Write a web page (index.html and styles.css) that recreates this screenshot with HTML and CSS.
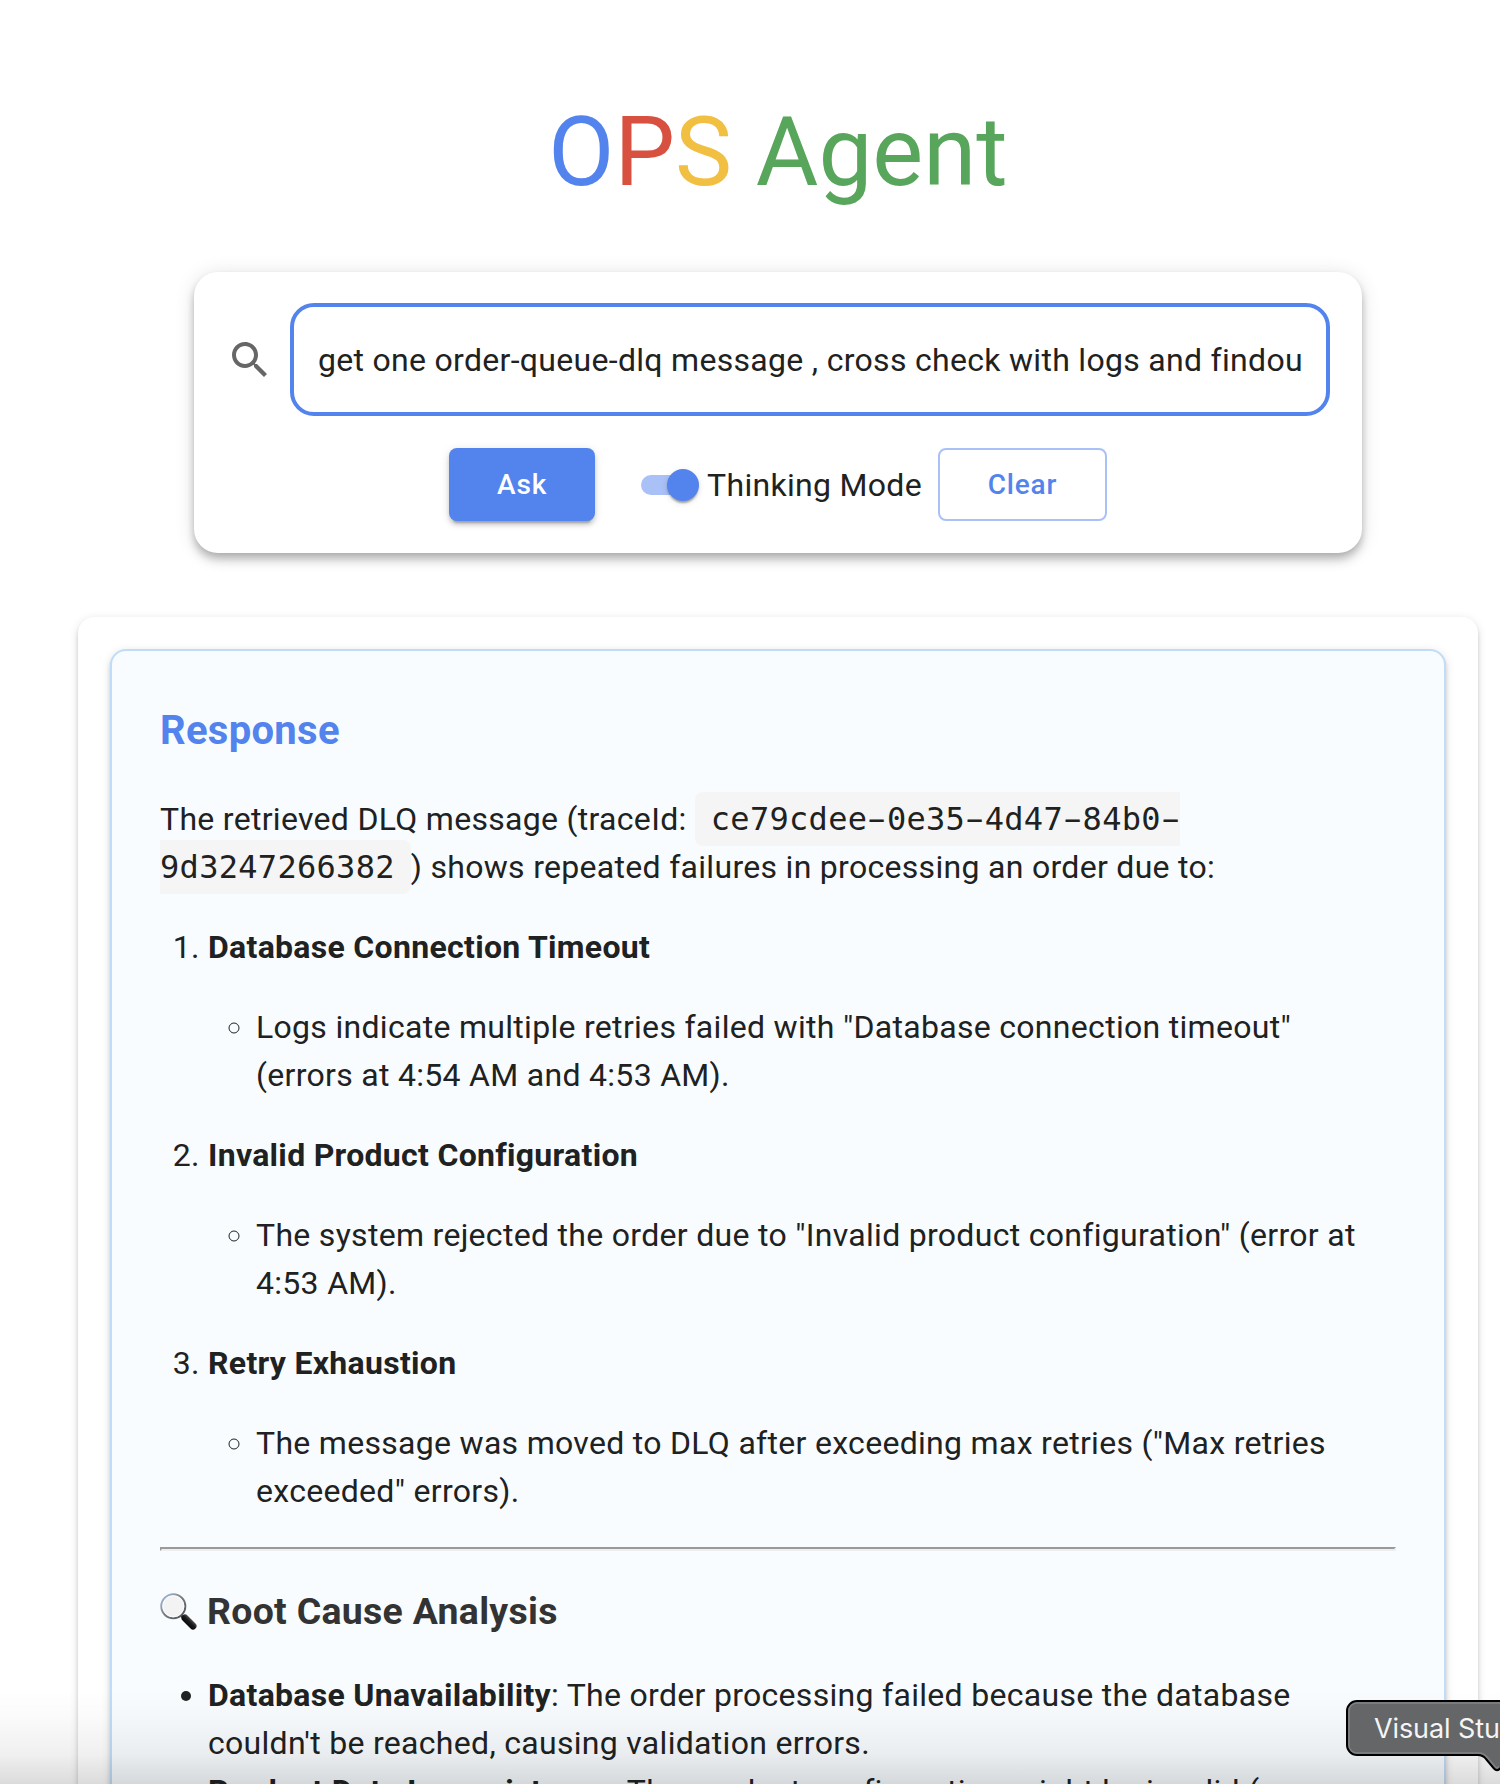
FILE: index.html
```html
<!DOCTYPE html>
<html lang="en">
<head>
<meta charset="utf-8">
<title>OPS Agent</title>
<link rel="stylesheet" href="styles.css">
</head>
<body>
<main class="page">
  <h1 class="title"><span class="blue">O</span><span class="red">P</span><span class="yellow">S</span><span class="green"> Agent</span></h1>

  <section class="search-card">
    <div class="search-row">
      <svg class="search-icon" viewBox="0 0 24 24"><path d="M15.5 14h-.79l-.28-.27C15.41 12.59 16 11.11 16 9.5 16 5.91 13.09 3 9.5 3S3 5.91 3 9.5 5.91 16 9.5 16c1.61 0 3.09-.59 4.23-1.57l.27.28v.79l5 4.99L20.49 19l-4.99-5zm-6 0C7.01 14 5 11.99 5 9.5S7.01 5 9.5 5 14 7.01 14 9.5 11.99 14 9.5 14z"/></svg>
      <div class="search-field"><div class="search-text">get one order-queue-dlq message , cross check with logs and findou</div></div>
    </div>
    <div class="actions">
      <button class="btn btn-ask">Ask</button>
      <label class="toggle"><span class="track"><span class="thumb"></span></span><span>Thinking Mode</span></label>
      <button class="btn btn-clear">Clear</button>
    </div>
  </section>

  <section class="results">
    <article class="response">
      <h2>Response</h2>
      <p>The retrieved DLQ message (traceId: <code>ce79cdee<span class="dash">-</span>0e35<span class="dash">-</span>4d47<span class="dash">-</span>84b0<span class="dash">-</span>9d3247266382</code>) shows repeated failures in processing an order due to:</p>
      <ol>
        <li><p><strong>Database Connection Timeout</strong></p>
          <ul><li>Logs indicate multiple retries failed with "Database connection timeout" (errors at 4:54 AM and 4:53 AM).</li></ul></li>
        <li><p><strong>Invalid Product Configuration</strong></p>
          <ul><li>The system rejected the order due to "Invalid product configuration" (error at 4:53 AM).</li></ul></li>
        <li><p><strong>Retry Exhaustion</strong></p>
          <ul><li>The message was moved to DLQ after exceeding max retries ("Max retries exceeded" errors).</li></ul></li>
      </ol>
      <hr>
      <h3><svg class="lens" viewBox="0 0 37 37">
        <defs>
          <linearGradient id="rim" x1="0" y1="0" x2="1" y2="1"><stop offset="0" stop-color="#a9c3ee"/><stop offset=".45" stop-color="#7d8188"/><stop offset="1" stop-color="#4a4d51"/></linearGradient>
          <linearGradient id="grip" x1="0" y1="1" x2="1" y2="0"><stop offset="0" stop-color="#000"/><stop offset=".55" stop-color="#1a1a1a"/><stop offset="1" stop-color="#777"/></linearGradient>
        </defs>
        <path d="M21 22l4 4" stroke="#333" stroke-width="3"/>
        <path d="M25 25l8 8" stroke="url(#grip)" stroke-width="7" stroke-linecap="round"/>
        <circle cx="13.3" cy="13.3" r="12" fill="#f3f3f4" stroke="url(#rim)" stroke-width="2"/>
        <circle cx="13.3" cy="13.3" r="10.6" fill="none" stroke="#fff" stroke-width=".8"/>
      </svg>Root Cause Analysis</h3>
      <ul class="causes">
        <li><strong>Database Unavailability</strong>: The order processing failed because the database couldn't be reached, causing validation errors.</li>
        <li><strong>Product Data Inconsistency</strong>: The product configuration might be invalid (e.g., missing fields).</li>
      </ul>
    </article>
  </section>
</main>
<div class="dock-shade"></div>
<div class="dock-tip">
  <svg class="dock-shape" viewBox="0 0 154 74">
    <path d="M170 1H11A10 10 0 0 0 1 11V45A10 10 0 0 0 11 55H132C136 55 138 56.500 140 59L148 68.500Q151 72 154 68.500L165 55" fill="#646668" stroke="#000" stroke-width="2"/>
    <path d="M170 3H11A8 8 0 0 0 3 11V45A8 8 0 0 0 11 53H133C137 53 139.500 55 141.500 57.500L149 66.500Q151 69 153 66.500" fill="none" stroke="#808283" stroke-width="1.500"/>
  </svg>
  <span class="dock-text">Visual Studio Code</span>
</div>
</body>
</html>
```
FILE: styles.css
```css
* { box-sizing: border-box; }

body {
  margin: 0;
  height: 1784px;
  position: relative;
  overflow: hidden;
  background: #fff;
  color: #202121;
  font: 32px/48px Roboto, sans-serif;
  letter-spacing: 0.3px;
}

.page {
  display: flex;
  flex-direction: column;
  width: 1400px;
  height: 1784px;
  margin-left: 78px;
}

.title {
  margin: 96px 0 64px;
  font-size: 96px;
  line-height: 112px;
  font-weight: 400;
  letter-spacing: 0;
  text-align: center;
  white-space: pre;
}
.blue { color: #5383ec; }
.red { color: #d85140; }
.yellow { color: #f1bf42; }
.green { color: #58a55c; }

.search-card {
  flex: none;
  align-self: center;
  width: 1168px;
  height: 281px;
  padding: 31px 32px 32px;
  border-radius: 24px;
  background: #fff;
  box-shadow: 0 4px 8px -2px rgba(0,0,0,.2), 0 8px 10px 0 rgba(0,0,0,.14), 0 2px 20px 0 rgba(0,0,0,.12);
}
.search-row {
  display: flex;
  align-items: center;
  gap: 16px;
}
.search-icon {
  width: 48px;
  height: 48px;
  fill: #666;
}
.search-field {
  flex: 1;
  min-width: 0;
  height: 113px;
  padding: 29px 24px;
  border: 4px solid #5383ec;
  border-radius: 24px;
}
.search-text {
  overflow: hidden;
  white-space: nowrap;
}

.actions {
  display: flex;
  justify-content: center;
  align-items: center;
  margin-top: 32px;
}
.btn {
  height: 73px;
  padding: 0;
  border: 0;
  border-radius: 8px;
  font: 500 28px/49px Roboto, sans-serif;
  letter-spacing: 0.8px;
}
.btn-ask {
  width: 146px;
  background: #5383ec;
  color: #fff;
  box-shadow: 0 6px 2px -4px rgba(0,0,0,.2), 0 4px 4px 0 rgba(0,0,0,.14), 0 2px 10px 0 rgba(0,0,0,.12);
}
.btn-clear {
  width: 169px;
  border: 2px solid #a9c1f6;
  background: #fff;
  color: #5383ec;
}
.toggle {
  display: flex;
  align-items: center;
  gap: 14px;
  margin: 0 16px 0 46px;
}
.track {
  display: flex;
  align-items: center;
  width: 52px;
  height: 20px;
  border-radius: 10px;
  background: #a9c1f6;
}
.thumb {
  flex: none;
  width: 32px;
  height: 32px;
  margin-left: 26px;
  border-radius: 50%;
  background: #5383ec;
  box-shadow: 0 4px 2px -2px rgba(0,0,0,.2), 0 2px 2px 0 rgba(0,0,0,.14), 0 2px 6px 0 rgba(0,0,0,.12);
}

.results {
  flex: none;
  height: 1300px;
  margin-top: 64px;
  padding: 32px;
  border-radius: 16px;
  background: #fff;
  box-shadow: 0 6px 2px -4px rgba(0,0,0,.2), 0 4px 4px 0 rgba(0,0,0,.14), 0 2px 10px 0 rgba(0,0,0,.12);
}
.response {
  height: 1236px;
  padding: 48px;
  border: 2px solid #bfdcf8;
  border-radius: 16px;
  background: #f8fcff;
  box-shadow: 0 6px 2px -4px rgba(0,0,0,.2), 0 4px 4px 0 rgba(0,0,0,.14), 0 2px 10px 0 rgba(0,0,0,.12);
}
.response h2 {
  margin: 0 0 32px;
  color: #5383ec;
  font-size: 40px;
  line-height: 64px;
  font-weight: 700;
}
.response p { margin: 0 0 32px; }
.response code {
  padding: 8px 16px;
  border-radius: 8px;
  background: #f5f5f5;
  font: 32px/1 "DejaVu Sans Mono", monospace;
}
.dash {
  display: inline-block;
  transform: scaleX(1.75);
}
.response ol,
.response ul {
  margin: 0 0 32px;
  padding-left: 48px;
}
.response strong { font-weight: 700; }
.response hr {
  height: 4px;
  margin: 32px 0;
  border: 2px solid;
  border-color: #9a9a9a #eee #eee #9a9a9a;
}
.response h3 {
  display: flex;
  align-items: center;
  gap: 10px;
  margin: 0 0 32px;
  color: #333;
  font-size: 37.44px;
  line-height: 56px;
  font-weight: 700;
}
.lens { width: 37px; height: 37px; }

.dock-shade {
  position: absolute;
  inset: 1690px 0 0;
  background: linear-gradient(rgba(0,0,0,0), rgba(0,0,0,.02) 30%, rgba(0,0,0,.06) 68%, rgba(0,0,0,.14));
}
.dock-tip {
  position: absolute;
  left: 1346px;
  top: 1700px;
  width: 154px;
  height: 74px;
  overflow: hidden;
}
.dock-shape {
  position: absolute;
  inset: 0;
}
.dock-text {
  position: absolute;
  left: 28px;
  top: 5px;
  color: #f5f5f5;
  font: 27px/48px Inter, sans-serif;
  letter-spacing: -0.1px;
  white-space: nowrap;
}
```
